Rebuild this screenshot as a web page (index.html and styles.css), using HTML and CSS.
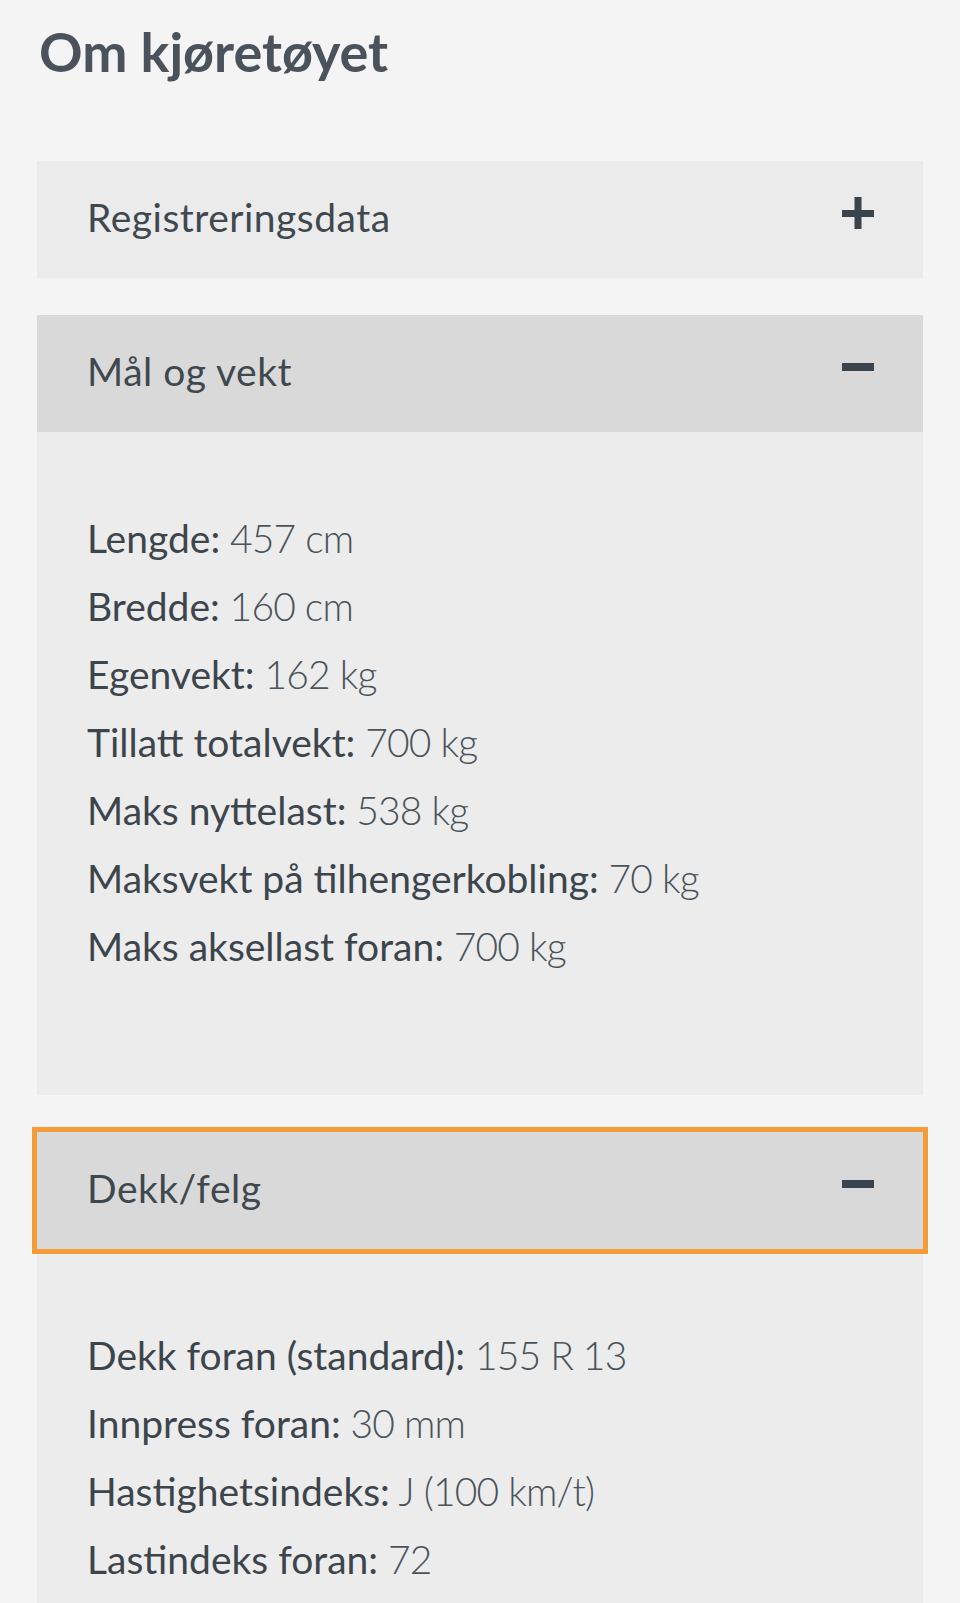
FILE: index.html
```html
<!DOCTYPE html>
<html lang="no">
<head>
    <meta charset="UTF-8">
    <meta name="viewport" content="width=device-width, initial-scale=1.0">
    <title>Om kjøretøyet</title>
    <link rel="stylesheet" href="styles.css">
</head>
<body>
    <div class="container">
        <h1>Om kjøretøyet</h1>

        <div class="panel">
            <button class="panel-head">
                <span>Registreringsdata</span>
                <svg class="icon" viewBox="0 0 32 32"><rect x="0" y="13" width="32" height="7"/><rect x="12.5" y="0" width="7" height="32"/></svg>
            </button>
        </div>

        <div class="panel open">
            <button class="panel-head">
                <span>Mål og vekt</span>
                <svg class="icon" viewBox="0 0 32 32"><rect x="0" y="12" width="32" height="8"/></svg>
            </button>
            <div class="panel-body">
                <p><b>Lengde:</b> 457 cm</p>
                <p><b>Bredde:</b> 160 cm</p>
                <p><b>Egenvekt:</b> 162 kg</p>
                <p><b>Tillatt totalvekt:</b> 700 kg</p>
                <p><b>Maks nyttelast:</b> 538 kg</p>
                <p><b>Maksvekt på tilhengerkobling:</b> 70 kg</p>
                <p><b>Maks aksellast foran:</b> 700 kg</p>
            </div>
        </div>

        <div class="panel open">
            <button class="panel-head focused">
                <span>Dekk/felg</span>
                <svg class="icon" viewBox="0 0 32 32"><rect x="0" y="12" width="32" height="8"/></svg>
            </button>
            <div class="panel-body">
                <p><b>Dekk foran (standard):</b> 155 R 13</p>
                <p><b>Innpress foran:</b> 30 mm</p>
                <p><b>Hastighetsindeks:</b> J (100 km/t)</p>
                <p><b>Lastindeks foran:</b> 72</p>
            </div>
        </div>
    </div>
</body>
</html>
```

FILE: styles.css
```css
body {
    margin: 0;
    background: #f4f4f4;
    font-family: Lato, "Open Sans", sans-serif;
    color: #3e474e;
}
.container {
    padding: 0 37px;
}
h1 {
    margin: 22px 0 79px 2px;
    font-size: 54px;
    line-height: 60px;
    font-weight: 700;
    color: #4a535b;
}
.panel {
    margin-bottom: 37px;
    background: #ececec;
}
.panel-head {
    display: flex;
    justify-content: space-between;
    align-items: flex-start;
    width: 100%;
    height: 117px;
    padding: 32px 49px 0 50px;
    border: none;
    background: #ebebeb;
    font-family: inherit;
    font-size: 39px;
    line-height: 48px;
    font-weight: 400;
    letter-spacing: 0.5px;
    color: #3f484f;
    text-align: left;
}
.open .panel-head {
    background: #d9d9d9;
}
.panel-head.focused {
    outline: 5px solid #f29b38;
}
.icon {
    width: 32px;
    height: 32px;
    margin-top: 4px;
    fill: #39444c;
}
.panel-body {
    padding: 72px 50px 115px;
}
.panel-body p {
    margin: 0;
    font-size: 39px;
    line-height: 68px;
    font-weight: 300;
    letter-spacing: -0.8px;
    color: #4a535a;
}
.panel-body b {
    font-weight: 400;
    letter-spacing: 0;
    color: #3c454c;
}
```
